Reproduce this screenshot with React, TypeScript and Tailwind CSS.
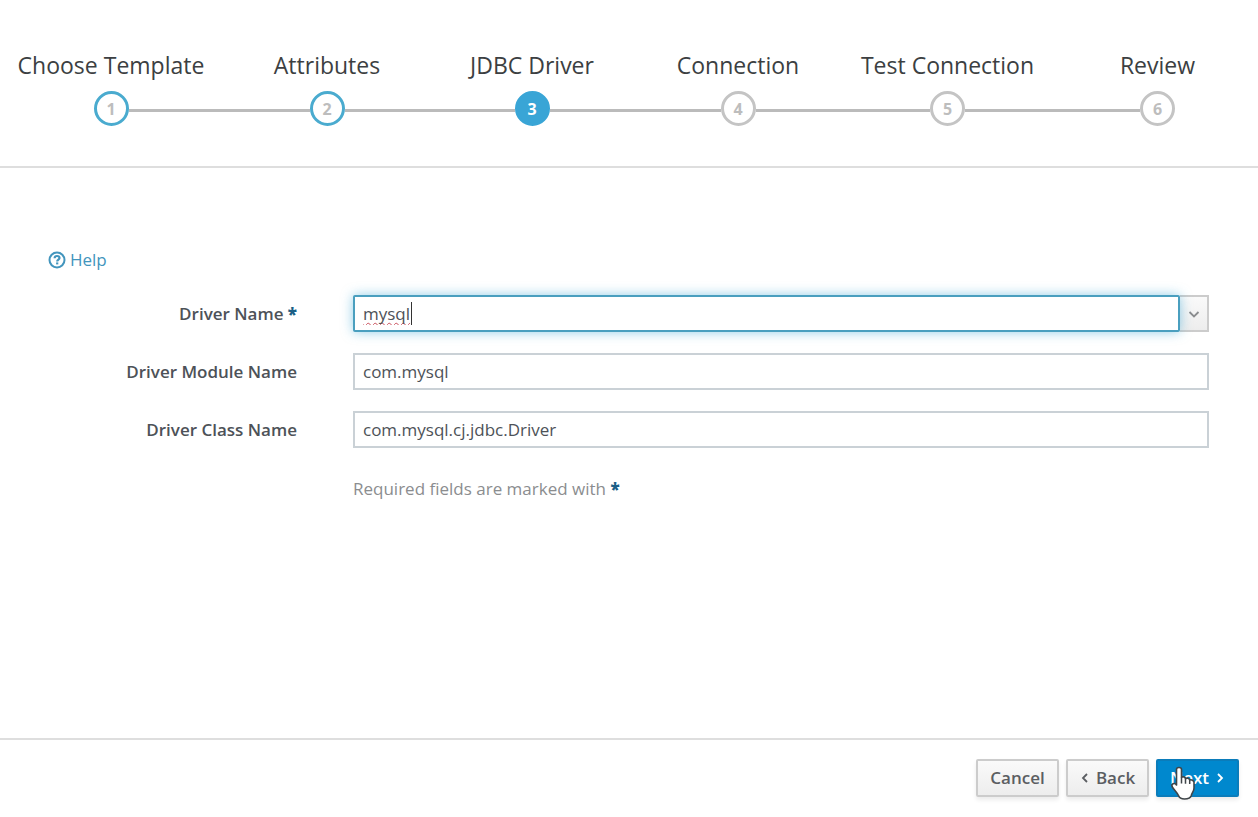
import React from 'react';

type StepState = 'visited' | 'active' | 'pending';

const steps: { label: string; state: StepState }[] = [
  { label: 'Choose Template', state: 'visited' },
  { label: 'Attributes', state: 'visited' },
  { label: 'JDBC Driver', state: 'active' },
  { label: 'Connection', state: 'pending' },
  { label: 'Test Connection', state: 'pending' },
  { label: 'Review', state: 'pending' },
];

const circleStyles: Record<StepState, string> = {
  visited: 'border-[#4aabcf] bg-white text-[#bdbdbd]',
  active: 'border-[#39a5d6] bg-[#39a5d6] text-white',
  pending: 'border-[#c4c4c4] bg-white text-[#bdbdbd]',
};

function Stepper() {
  return (
    <ol className="-mr-1.5 grid grid-cols-[222fr_210fr_200fr_212fr_207fr_213fr] pt-[50px] pb-10">
      {steps.map((step, i) => (
        <li key={step.label} aria-current={step.state === 'active' ? 'step' : undefined}>
          <div className="text-center text-[23px] leading-[30px] whitespace-nowrap text-[#3c3f42]">{step.label}</div>
          <div className="mt-[11px] flex items-center">
            <span className={`mt-1 h-[3px] flex-1 ${i > 0 ? 'bg-[#bbbbbb]' : ''}`} />
            <span
              className={`flex size-[35px] items-center justify-center rounded-full border-[3px] text-base leading-none font-bold ${circleStyles[step.state]}`}
            >
              {i + 1}
            </span>
            <span className={`mt-1 h-[3px] flex-1 ${i < steps.length - 1 ? 'bg-[#bbbbbb]' : ''}`} />
          </div>
        </li>
      ))}
    </ol>
  );
}

function Field({ id, label, required, children }: { id: string; label: string; required?: boolean; children: React.ReactNode }) {
  return (
    <div className="grid grid-cols-[248px_1fr] items-center gap-14">
      <label htmlFor={id} className="text-right font-semibold text-[#4d5258]">
        {label}
        {required && <span className="font-extrabold text-[#1b5f86]"> *</span>}
      </label>
      {children}
    </div>
  );
}

const inputStyle = 'h-[37px] w-full border-2 border-[#cad1d6] bg-white px-2 text-[#4d5258] outline-none';
const buttonStyle = 'flex h-[38px] w-[83px] items-center justify-center gap-1 border-2 font-semibold rounded-[2px] shadow-[0_3px_4px_rgba(0,0,0,0.08)]';

function Chevron({ d, className }: { d: string; className: string }) {
  return (
    <svg viewBox="0 0 12 12" className={className} fill="none" stroke="currentColor" strokeWidth="1.8" aria-hidden="true">
      <path d={d} />
    </svg>
  );
}

export default function App() {
  return (
    <div className="flex min-h-screen flex-col overflow-hidden bg-white font-['Open_Sans','Noto_Sans',sans-serif] text-[17px] leading-6">
      <header className="border-b-2 border-[#dedede]">
        <Stepper />
      </header>

      <main className="flex-1 px-12 pt-20">
        <a href="#help" className="inline-flex items-center gap-1 text-[#4295bd]">
          <svg viewBox="0 0 18 18" className="size-[18px]" fill="none" stroke="currentColor" aria-hidden="true">
            <circle cx="9" cy="9" r="7.5" strokeWidth="2" />
            <path d="M6.6 7.2C6.7 5.6 7.8 5 9 5s2.5.7 2.5 2.1C11.5 8.6 9.2 8.7 9.2 10.4" strokeWidth="2.2" />
            <path d="M9.2 11.4v2" strokeWidth="2.2" />
          </svg>
          Help
        </a>

        <form className="mt-5 flex flex-col gap-[21px] px-px" onSubmit={(e) => e.preventDefault()}>
          <Field id="driver-name" label="Driver Name" required>
            <div className="relative flex">
              <input
                id="driver-name"
                type="text"
                defaultValue="mysql"
                spellCheck={false}
                className="relative h-[37px] min-w-0 flex-1 rounded-[2px] border-2 border-[#4a9fbf] bg-white px-2 text-[#4d5258] underline decoration-[#c9505c] decoration-wavy decoration-1 underline-offset-2 shadow-[0_0_12px_rgba(57,165,214,0.55)] outline-none [text-decoration-skip-ink:none]"
              />
              <span className="absolute top-[7px] left-[58px] h-[23px] w-px bg-[#333333]" />
              <button
                type="button"
                aria-label="Show drivers"
                className="flex w-[29px] items-center justify-center border-2 border-l-0 border-[#cccccc] bg-linear-to-b from-[#fafafa] to-[#ededed] text-[#8b8d8f]"
              >
                <Chevron d="M1.5 4l4.5 4.5L10.5 4" className="size-3" />
              </button>
            </div>
          </Field>
          <Field id="driver-module" label="Driver Module Name">
            <input id="driver-module" type="text" defaultValue="com.mysql" className={inputStyle} />
          </Field>
          <Field id="driver-class" label="Driver Class Name">
            <input id="driver-class" type="text" defaultValue="com.mysql.cj.jdbc.Driver" className={inputStyle} />
          </Field>
          <p className="mt-2 pl-[304px] text-[#8b8d8f]">
            Required fields are marked with <span className="font-extrabold text-[#1b5f86]">*</span>
          </p>
        </form>
      </main>

      <footer className="flex justify-end gap-[7px] border-t-2 border-[#dedede] px-[19px] pt-[19px] pb-5">
        <button type="button" className={`${buttonStyle} border-[#cccccc] bg-linear-to-b from-[#fafafa] to-[#ededed] text-[#5b5e62]`}>
          Cancel
        </button>
        <button type="button" className={`${buttonStyle} border-[#cccccc] bg-linear-to-b from-[#fafafa] to-[#ededed] text-[#5b5e62]`}>
          <Chevron d="M7 2L3 6l4 4" className="size-3" />
          Back
        </button>
        <button type="button" className={`${buttonStyle} relative border-[#0b7cba] bg-[#0088ce] text-white`}>
          Next
          <Chevron d="M5 2l4 4-4 4" className="size-3" />
          <svg viewBox="0 0 26 34" className="absolute top-[5px] left-3 h-[34px] w-[26px]" aria-hidden="true">
            <path
              d="M6.5 3.5C6.5 0.8 11.5 0.8 11.5 3.5V11.5C12.5 10.3 15.3 10.7 15.5 12.7C16.8 11.5 19.5 12.2 19.7 14C21.3 13.3 24 14.3 24 16.5V22C24 25.5 22 26.5 21.3 29.5Q20.3 33 14.5 33Q9.8 33 8.6 29.8C7.5 27 4.5 24.5 2.3 21C0.8 18 4.5 16 6.5 19Z"
              fill="#fff"
              stroke="#3f4549"
              strokeWidth="1.6"
              strokeLinejoin="round"
            />
            <path d="M11.5 11.5v6M15.5 12.7v5M19.7 14v4" stroke="#3f4549" strokeWidth="1.5" />
          </svg>
        </button>
      </footer>
    </div>
  );
}
